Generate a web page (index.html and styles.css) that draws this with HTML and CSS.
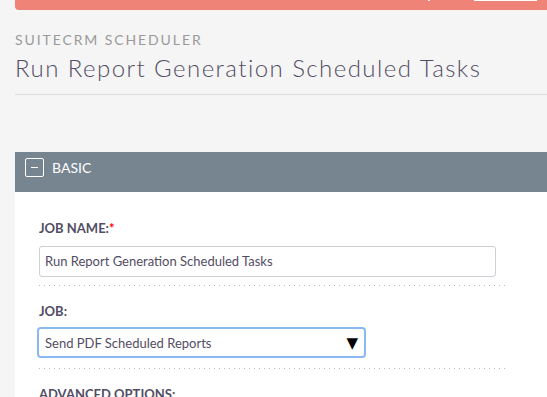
FILE: index.html
```html
<!DOCTYPE html>
<html lang="en">
<head>
  <meta charset="UTF-8">
  <title>Scheduler</title>
  <link rel="stylesheet" href="styles.css">
</head>
<body>
  <div class="alert-bar">
    <span class="alert-tick"></span>
    <span class="alert-btn"></span>
  </div>

  <div class="page-head">
    <div class="module-title">SUITECRM SCHEDULER</div>
    <h1>Run Report Generation Scheduled Tasks</h1>
  </div>

  <div class="panel">
    <div class="panel-heading">
      <span class="toggle"><span class="toggle-line"></span></span>
      <span class="panel-title">BASIC</span>
    </div>
    <div class="panel-body">
      <div class="field">
        <label>JOB NAME:<span class="req">*</span></label>
        <div class="input">Run Report Generation Scheduled Tasks</div>
      </div>
      <div class="field field-job">
        <label>JOB:</label>
        <div class="select">
          <span>Send PDF Scheduled Reports</span>
          <span class="arrow">&#9660;</span>
        </div>
      </div>
      <div class="field last">
        <label>ADVANCED OPTIONS:</label>
      </div>
    </div>
  </div>
</body>
</html>
```

FILE: styles.css
```css
body {
  margin: 0;
  background-color: #f5f5f5;
  font-family: Lato, "Open Sans", sans-serif;
  color: #534d64;
  overflow: hidden;
}

.alert-bar {
  margin-left: 15px;
  height: 10px;
  background-color: #f08377;
  border-bottom-left-radius: 4px;
  display: flex;
  align-items: flex-start;
  justify-content: flex-end;
}

.alert-tick {
  width: 2px;
  height: 1px;
  background-color: #fff;
  margin-right: 44px;
}

.alert-btn {
  width: 63px;
  height: 1px;
  background-color: #fff;
  margin-right: 10px;
}

.page-head {
  margin-left: 15px;
  padding-top: 21px;
  padding-bottom: 11px;
  border-bottom: 1px solid #dddddd;
}

.module-title {
  font-size: 14px;
  letter-spacing: 1.9px;
  color: #9a9a9a;
  line-height: 18px;
}

h1 {
  margin: 4px 0 0;
  font-size: 24px;
  font-weight: 300;
  letter-spacing: 1.45px;
  line-height: 30px;
  color: #534d64;
}

.panel {
  margin-left: 15px;
  margin-top: 57px;
  background-color: #fff;
}

.panel-heading {
  height: 40px;
  box-sizing: border-box;
  background-color: #778591;
  display: flex;
  align-items: flex-start;
  padding: 6px 0 0 10px;
  gap: 8px;
}

.toggle {
  width: 17px;
  height: 17px;
  border: 1px solid #fff;
  border-radius: 2px;
  display: flex;
  align-items: center;
  justify-content: center;
}

.toggle-line {
  width: 7px;
  height: 1px;
  background-color: #fff;
}

.panel-title {
  color: #fff;
  font-size: 14px;
  line-height: 19px;
}

.panel-body {
  padding: 28px 40px 0 24px;
}

.field {
  padding-bottom: 9px;
  margin-bottom: 17px;
  background-image: linear-gradient(to right, #b8b8b8 1px, transparent 1px);
  background-size: 5px 1px;
  background-repeat: repeat-x;
  background-position: left bottom;
}

.field-job {
  padding-bottom: 11px;
}

.field.last {
  background: none;
}

.field label {
  display: block;
  font-weight: 700;
  font-size: 13px;
  line-height: 16px;
  margin-bottom: 10px;
}

.req {
  color: #ff0000;
}

.input {
  width: 450px;
  height: 29px;
  border: 1px solid #cfcfd6;
  border-radius: 3px;
  padding-left: 5px;
  font-size: 13px;
  line-height: 29px;
}

.select {
  width: 313px;
  height: 27px;
  margin: -2px 0 0 -2px;
  border: 2px solid #8ab8f2;
  border-radius: 4px;
  padding: 0 6px 0 6px;
  font-size: 13px;
  display: flex;
  align-items: center;
  justify-content: space-between;
}

.arrow {
  color: #000;
  font-size: 15px;
  font-family: "DejaVu Sans", sans-serif;
}
```
